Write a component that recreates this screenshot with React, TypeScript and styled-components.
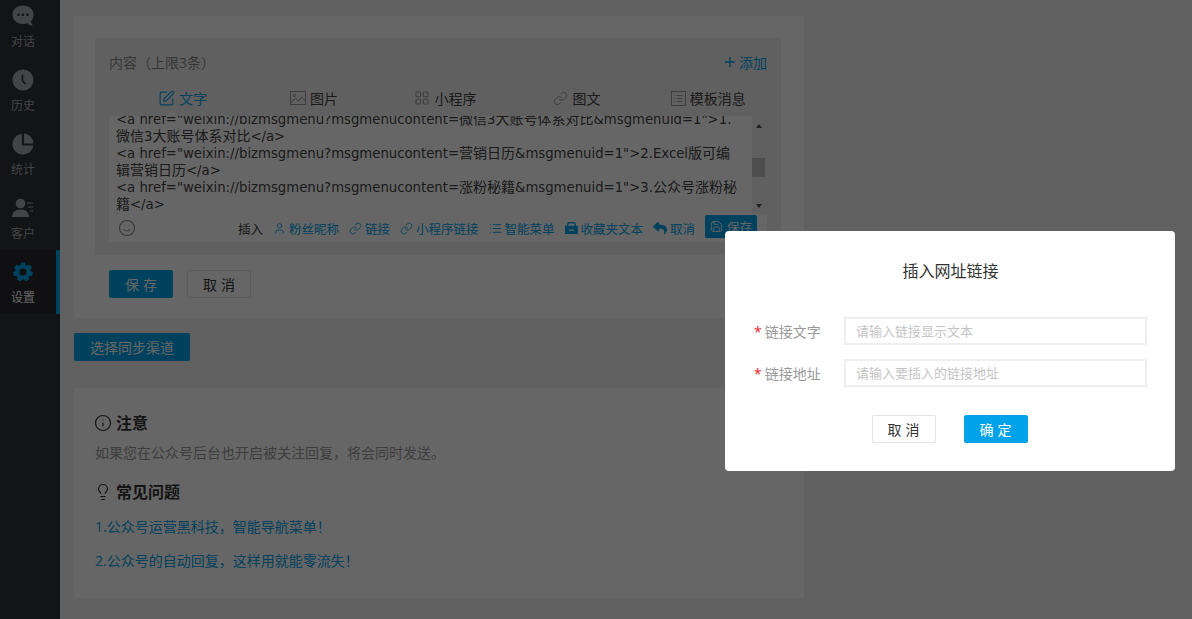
import * as React from "react";
import styled, { createGlobalStyle } from "styled-components";
import { SquarePen, LayoutGrid, Link, User, List, Save, Info, Lightbulb, Smile, Plus } from "lucide-react";
import { FaReply } from "react-icons/fa";

const GlobalStyle = createGlobalStyle`
  html, body {
    margin: 0;
    height: 100%;
    overflow: hidden;
  }
  body {
    font-family: "Open Sans", "Noto Sans CJK SC", sans-serif;
    font-size: 14px;
    color: #333;
    background: #f3f3f3;
  }
  * { box-sizing: border-box; }
`;

const SPage = styled.div`
  display: flex;
  width: 1192px;
  height: 619px;
  overflow: hidden;
`;

const SSide = styled.nav`
  width: 60px;
  flex-shrink: 0;
  background: #303237;
`;

const SSideList = styled.div`
  margin-top: -6px;
`;

const SSideItem = styled.div<{ $active?: boolean }>`
  height: 64px;
  display: flex;
  flex-direction: column;
  align-items: center;
  justify-content: center;
  gap: 6px;
  padding: 3px 10px 0 0;
  font-size: 12px;
  line-height: 17px;
  color: ${(p) => (p.$active ? "#ffffff" : "#a9aaac")};
  background: ${(p) => (p.$active ? "#282a2e" : "transparent")};
  border-right: 4px solid ${(p) => (p.$active ? "#00a2ea" : "transparent")};
  white-space: nowrap;
  svg { display: block; }
`;

const SMain = styled.main`
  flex: 1;
  min-width: 0;
  padding: 16px 388px 0 14px;
`;

const SCard = styled.section`
  background: #fff;
  padding: 22px 23px 20px 21px;
`;

const SPanel = styled.div`
  background: #f1f1f1;
  padding: 0 14px;
  height: 217px;
  display: flex;
  flex-direction: column;
`;

const SPanelHead = styled.div`
  height: 47px;
  display: flex;
  align-items: center;
  justify-content: space-between;
  color: #888;
  padding-top: 1px;
`;

const SAdd = styled.span`
  display: flex;
  align-items: center;
  gap: 1px;
  color: #00a2ea;
`;

const STabs = styled.div`
  height: 26px;
  margin: 0 -7px 5px 8px;
  display: grid;
  grid-template-columns: repeat(5, 1fr);
`;

const STab = styled.span<{ $active?: boolean }>`
  display: flex;
  align-items: center;
  justify-content: center;
  gap: 4px;
  color: ${(p) => (p.$active ? "#00a2ea" : "#444")};
  svg { color: ${(p) => (p.$active ? "#00a2ea" : "#999")}; }
`;

const STabInner = styled.span`
  display: flex;
  align-items: center;
  gap: 4px;
  position: relative;
`;

const SNotch = styled.i`
  position: absolute;
  left: 8px;
  bottom: -8px;
  border: 6px solid transparent;
  border-top-width: 0;
  border-bottom-color: #fff;
`;

const SEditor = styled.div`
  background: #fff;
  flex: 1;
  min-height: 0;
  margin-bottom: 13px;
  display: flex;
  flex-direction: column;
`;

const STextWrap = styled.div`
  height: 98px;
  display: flex;
`;

const SText = styled.div`
  flex: 1;
  min-width: 0;
  overflow: hidden;
  padding-left: 7px;
  font-family: "DejaVu Sans", "Noto Sans CJK SC", sans-serif;
  font-size: 13.25px;
  white-space: pre;
  color: #444;
`;

const STextInner = styled.div`
  margin-top: -5px;
`;

const SLine = styled.div`
  height: 17px;
  line-height: 17px;
`;

const SCjk = styled.span`
  font-family: "Noto Sans CJK SC", sans-serif;
  font-size: 14px;
  line-height: 1;
`;

const SScroll = styled.div`
  width: 15px;
  flex-shrink: 0;
  background: #f1f1f1;
  display: flex;
  flex-direction: column;
  align-items: center;
  justify-content: space-between;
  padding: 8px 2px 6px 0;
  position: relative;
`;

const SArrow = styled.i<{ $down?: boolean }>`
  border: 3.5px solid transparent;
  ${(p) => (p.$down ? "border-top: 4px solid #505050; border-bottom: 0;" : "border-bottom: 4px solid #505050; border-top: 0;")}
`;

const SThumb = styled.div`
  position: absolute;
  left: 0;
  top: 42px;
  width: 13px;
  height: 19px;
  background: #c1c1c1;
`;

const SToolbar = styled.div`
  flex: 1;
  display: flex;
  align-items: center;
  padding-left: 9px;
  font-size: 12.5px;
  color: #00a2ea;
  position: relative;
`;

const SInsert = styled.span`
  color: #444;
  margin-left: 102px;
  margin-right: 10px;
`;

const STool = styled.span`
  display: flex;
  align-items: center;
  gap: 3px;
  margin-right: 10px;
  white-space: nowrap;
`;

const SSmallSave = styled.span`
  position: absolute;
  left: 596px;
  top: 1px;
  width: 52px;
  height: 23px;
  border-radius: 2px;
  background: #00a2ea;
  color: #fff;
  display: flex;
  align-items: center;
  justify-content: center;
  gap: 4px;
`;

const SActions = styled.div`
  display: flex;
  gap: 14px;
  margin-top: 15px;
  padding-left: 14px;
`;

const SButton = styled.button<{ $primary?: boolean }>`
  width: 64px;
  height: 28px;
  border-radius: 2px;
  border: 1px solid ${(p) => (p.$primary ? "#00a2ea" : "#e5e5e5")};
  background: ${(p) => (p.$primary ? "#00a2ea" : "#fff")};
  color: ${(p) => (p.$primary ? "#fff" : "#333")};
  font: inherit;
  font-size: 14px;
  letter-spacing: 4px;
  padding: 0 0 0 4px;
`;

const SSync = styled.button`
  display: block;
  margin: 15px 0 27px;
  width: 116px;
  height: 28px;
  border: 0;
  border-radius: 2px;
  background: #00a2ea;
  color: #fff;
  font: inherit;
  font-size: 14px;
  padding: 0;
`;

const SNotes = styled.section`
  background: #fff;
  height: 210px;
  padding: 24px 21px;
`;

const SNoteTitle = styled.h3`
  margin: 0;
  display: flex;
  align-items: center;
  gap: 4px;
  font-size: 16px;
  line-height: 22px;
  font-weight: 700;
  color: #333;
  svg { margin-left: -1px; }
`;

const SNoteText = styled.p`
  margin: 9px 0 18px;
  font-size: 14px;
  line-height: 20px;
  color: #999;
`;

const SNoteLink = styled.a`
  display: block;
  margin-top: 13px;
  font-size: 14px;
  line-height: 21px;
  color: #00a2ea;
`;

const SOverlay = styled.div`
  position: fixed;
  inset: 0;
  background: rgba(0, 0, 0, 0.6);
`;

const SDialog = styled.div`
  position: fixed;
  left: 725px;
  top: 231px;
  width: 450px;
  height: 240px;
  border-radius: 4px;
  background: #fff;
  padding: 28px 28px 0 29px;
`;

const SDialogTitle = styled.h2`
  margin: 0 0 34px;
  font-size: 16px;
  line-height: 24px;
  font-weight: 400;
  color: #333;
  text-align: center;
`;

const SField = styled.div`
  display: flex;
  align-items: center;
  height: 28px;
  margin-bottom: 14px;
`;

const SLabel = styled.label`
  width: 90px;
  font-size: 14px;
  color: #999;
  &::before {
    content: "*";
    color: #f5222d;
    margin-right: 3px;
  }
`;

const SInput = styled.div`
  flex: 1;
  height: 28px;
  border: 2px solid #efefef;
  padding-left: 10px;
  font-size: 13px;
  line-height: 24px;
  color: #c4c4c4;
`;

const SDialogActions = styled.div`
  display: flex;
  justify-content: center;
  gap: 28px;
  margin-top: 28px;
  padding-right: 2px;
`;

const icon = { strokeWidth: 1.6 };

const ChatIcon = () => (
  <svg width="22" height="22" viewBox="0 0 22 22">
    <path fill="#a9aaac" d="M11 .5C5 .5.5 4.4.5 9.7c0 5.2 4.5 9.2 10.5 9.2 1.500 0 3-.2 4.200-.7 1.200 1.500 3.600 2.500 5.800 2.500-1.300-1.200-2-2.800-2.100-4.400 1.600-1.600 2.600-4 2.600-6.600C21.500 4.400 17 .500 11 .500z" />
    <circle cx="6.500" cy="9.700" r="1.300" fill="#303237" />
    <circle cx="11" cy="9.700" r="1.300" fill="#303237" />
    <circle cx="15.500" cy="9.700" r="1.300" fill="#303237" />
  </svg>
);

const ClockIcon = () => (
  <svg width="22" height="22" viewBox="0 0 22 22">
    <circle cx="11" cy="11" r="10.500" fill="#a9aaac" />
    <path d="M10.500 5.500v6.500l3 3" fill="none" stroke="#303237" strokeWidth="1.600" />
  </svg>
);

const PieIcon = () => (
  <svg width="22" height="22" viewBox="0 0 22 22">
    <path fill="#a9aaac" d="M9.800 1C4.500 1.500.5 6 .5 11.200c0 5.800 4.700 10.300 10.500 10.300 5.200 0 9.700-3.900 10.300-9H9.800z" />
    <path fill="#a9aaac" d="M12 .500v10h9.500C21.200 5.200 17.200 1 12 .500z" />
  </svg>
);

const ClientIcon = () => (
  <svg width="22" height="22" viewBox="0 0 22 22">
    <circle cx="8.500" cy="6.500" r="4.800" fill="#a9aaac" />
    <path fill="#a9aaac" d="M0 20c0-4.500 3-7.500 8.500-7.500S17 15.500 17 20z" />
    <path d="M15 6h6M16 10h5M18 14h3" stroke="#a9aaac" strokeWidth="1.200" />
  </svg>
);

const GearIcon = () => (
  <svg width="22" height="22" viewBox="-1 -1 22 22">
    <path fill="#00a2ea" fillRule="evenodd" d="M8 .500h4l.5 2.400 1.700.8 2.200-1.200 2.600 3-1.500 1.900.4 1.800 2.100 1-.9 3.800-2.400-.1-1.200 1.500.6 2.300-3.600 1.700-1.400-2H9l-1.400 2-3.600-1.700.6-2.300-1.200-1.500-2.400.1L.1 10.200l2.100-1 .4-1.800-1.500-1.900 2.600-3 2.200 1.200 1.700-.8zM10 6.500a3.500 3.500 0 1 0 0 7 3.500 3.500 0 0 0 0-7z" />
  </svg>
);

const PictureIcon = () => (
  <svg width="16" height="14" viewBox="0 0 16 14" fill="none" stroke="#999">
    <rect x=".5" y=".5" width="15" height="13" />
    <circle cx="4.500" cy="4.500" r="1.200" />
    <path d="M1 11.500 5.500 7.500l3 2.500 3-4 4 4" />
  </svg>
);

const PrintIcon = () => (
  <svg width="13" height="12" viewBox="0 0 14 13">
    <path fill="#00a2ea" fillRule="evenodd" d="M3 0h8l1 4h2v9H0V4h2zM4 1.500 3.500 4h7L10 1.500zM4 8v1.500h6V8z" />
  </svg>
);

const TemplateIcon = () => (
  <svg width="15" height="15" viewBox="0 0 15 15" fill="none" stroke="#999">
    <rect x=".5" y=".5" width="14" height="14" />
    <path d="M3.500 4.500h1M6 4.500h5.500M3.500 7.500h1M6 7.500h5.500M3.500 10.500h1M6 10.500h5.500" />
  </svg>
);

const lines = [
  '<a href="weixin://bizmsgmenu?msgmenucontent=微信3大账号体系对比&msgmenuid=1">1.',
  "微信3大账号体系对比</a>",
  '<a href="weixin://bizmsgmenu?msgmenucontent=营销日历&msgmenuid=1">2.Excel版可编',
  "辑营销日历</a>",
  '<a href="weixin://bizmsgmenu?msgmenucontent=涨粉秘籍&msgmenuid=1">3.公众号涨粉秘',
  "籍</a>",
];

// latin in the box runs a bit narrower than the 14px chinese next to it
function renderLine(line: string) {
  return line.split(/([\u4e00-\u9fff]+)/).map((part, i) =>
    i % 2 === 1 ? <SCjk key={i}>{part}</SCjk> : part
  );
}

const App = () => {
  return (
    <SPage>
      <GlobalStyle />
      <SSide>
        <SSideList>
          <SSideItem><ChatIcon />对话</SSideItem>
          <SSideItem><ClockIcon />历史</SSideItem>
          <SSideItem><PieIcon />统计</SSideItem>
          <SSideItem><ClientIcon />客户</SSideItem>
          <SSideItem $active><GearIcon />设置</SSideItem>
        </SSideList>
      </SSide>
      <SMain>
        <SCard>
          <SPanel>
            <SPanelHead>
              内容（上限3条）
              <SAdd><Plus size={16} strokeWidth={2} />添加</SAdd>
            </SPanelHead>
            <STabs>
              <STab $active><STabInner><SquarePen size={17} {...icon} />文字<SNotch /></STabInner></STab>
              <STab><PictureIcon />图片</STab>
              <STab><LayoutGrid size={16} {...icon} />小程序</STab>
              <STab><Link size={15} {...icon} />图文</STab>
              <STab><TemplateIcon />模板消息</STab>
            </STabs>
            <SEditor>
              <STextWrap>
                <SText>
                  <STextInner>
                    {lines.map((l) => <SLine key={l}>{renderLine(l)}</SLine>)}
                  </STextInner>
                </SText>
                <SScroll>
                  <SArrow />
                  <SThumb />
                  <SArrow $down />
                </SScroll>
              </STextWrap>
              <SToolbar>
                <Smile size={18} strokeWidth={1.5} color="#888" />
                <SInsert>插入</SInsert>
                <STool><User size={13} {...icon} />粉丝昵称</STool>
                <STool><Link size={13} {...icon} />链接</STool>
                <STool><Link size={13} {...icon} />小程序链接</STool>
                <STool><List size={13} strokeWidth={2} />智能菜单</STool>
                <STool><PrintIcon />收藏夹文本</STool>
                <STool><FaReply size={14} />取消</STool>
                <SSmallSave><Save size={13} {...icon} />保存</SSmallSave>
              </SToolbar>
            </SEditor>
          </SPanel>
          <SActions>
            <SButton $primary>保存</SButton>
            <SButton>取消</SButton>
          </SActions>
        </SCard>
        <SSync>选择同步渠道</SSync>
        <SNotes>
          <SNoteTitle><Info size={18} {...icon} />注意</SNoteTitle>
          <SNoteText>如果您在公众号后台也开启被关注回复，将会同时发送。</SNoteText>
          <SNoteTitle><Lightbulb size={18} {...icon} />常见问题</SNoteTitle>
          <SNoteLink>1.公众号运营黑科技，智能导航菜单！</SNoteLink>
          <SNoteLink>2.公众号的自动回复，这样用就能零流失！</SNoteLink>
        </SNotes>
      </SMain>
      <SOverlay />
      <SDialog>
        <SDialogTitle>插入网址链接</SDialogTitle>
        <SField>
          <SLabel>链接文字</SLabel>
          <SInput>请输入链接显示文本</SInput>
        </SField>
        <SField>
          <SLabel>链接地址</SLabel>
          <SInput>请输入要插入的链接地址</SInput>
        </SField>
        <SDialogActions>
          <SButton>取消</SButton>
          <SButton $primary>确定</SButton>
        </SDialogActions>
      </SDialog>
    </SPage>
  );
};

export default App;
